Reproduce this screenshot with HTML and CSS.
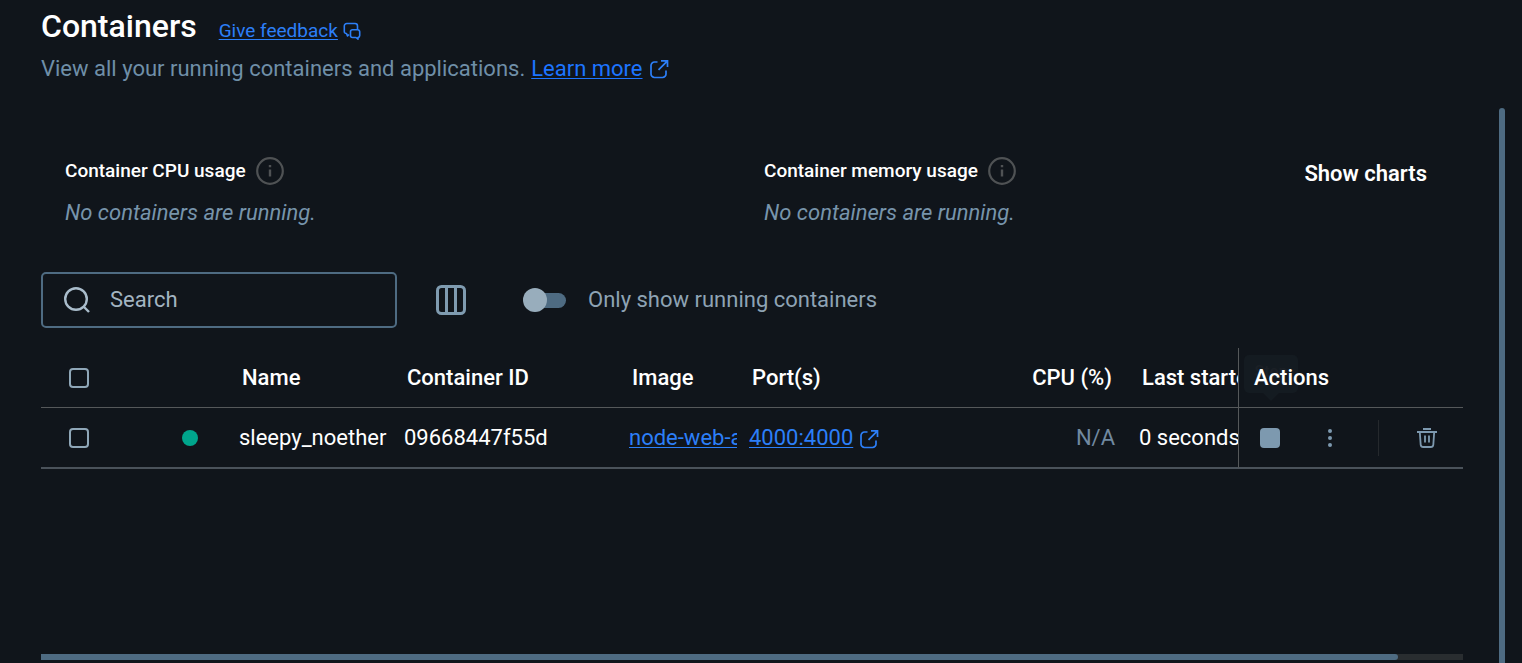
FILE: index.html
```html
<!DOCTYPE html>
<html lang="en">
<head>
<meta charset="utf-8">
<title>Containers</title>
<link rel="stylesheet" href="styles.css">
</head>
<body>
<svg class="sprite" aria-hidden="true">
  <symbol id="external" viewBox="0 0 20 20">
    <path d="M8.500 3H5.500A3.500 3.500 0 0 0 2 6.500V15a3.500 3.500 0 0 0 3.500 3.500H13.500A3.500 3.500 0 0 0 17 15v-3.500M12 1.800h6.500V8M18 2.300 9.500 10.800" fill="none" stroke="currentColor" stroke-width="1.700"/>
  </symbol>
  <symbol id="info" viewBox="0 0 28 28">
    <circle cx="14" cy="14" r="12.800" fill="none" stroke="currentColor" stroke-width="2.200"/>
    <path d="M14 12.500V19.500M14 8v2.200" stroke="currentColor" stroke-width="2.400"/>
  </symbol>
</svg>

<header class="page-header">
  <div class="title-row">
    <h1>Containers</h1>
    <a class="feedback" href="#"><span>Give feedback</span>
      <svg width="18" height="18" viewBox="0 0 18 18" fill="none" stroke="currentColor" stroke-width="1.600" stroke-linejoin="round"><path d="M6 12.500 4.500 14 3.500 11.500A2 2 0 0 1 1.300 9.500V4A2.500 2.500 0 0 1 3.800 1.500H12A2.500 2.500 0 0 1 14.500 4v3.500"/><path d="M9.500 7.800H14.700a2 2 0 0 1 2 2v3.700a2 2 0 0 1-1.700 2v1.700l-2-1.700H9.500a2 2 0 0 1-2-2V9.800a2 2 0 0 1 2-2z"/></svg>
    </a>
  </div>
  <p class="subtitle"><span>View all your running containers and applications.</span> <a href="#">Learn more</a><svg class="ext" width="20" height="20"><use href="#external"/></svg></p>
</header>

<div class="body">
  <main class="content">
    <section class="usage">
      <div>
        <h2>Container CPU usage <svg width="28" height="28"><use href="#info"/></svg></h2>
        <p>No containers are running.</p>
      </div>
      <div>
        <h2>Container memory usage <svg width="28" height="28"><use href="#info"/></svg></h2>
        <p>No containers are running.</p>
      </div>
      <button class="show-charts" type="button">Show charts</button>
    </section>

    <div class="toolbar">
      <label class="search">
        <svg width="28" height="28" viewBox="0 0 28 28" fill="none" stroke="currentColor" stroke-width="2.400"><circle cx="13" cy="13" r="10.800"/><path d="m20.500 20.500 5.500 5.500"/></svg>
        <input type="text" placeholder="Search" aria-label="Search">
      </label>
      <button class="columns" type="button" aria-label="Choose columns">
        <svg width="30" height="30" viewBox="0 0 30 30" fill="none" stroke="currentColor" stroke-width="3"><rect x="1.500" y="1.500" width="27" height="27" rx="4"/><path d="M10.500 2v26M19.500 2v26"/></svg>
      </button>
      <label class="switch"><input type="checkbox"><span>Only show running containers</span></label>
    </div>

    <div class="table-wrap">
      <table>
        <colgroup><col class="c-check"><col class="c-status"><col class="c-name"><col class="c-id"><col class="c-image"><col class="c-ports"><col class="c-cpu"><col class="c-last"><col class="c-actions"></colgroup>
        <thead>
          <tr>
            <th class="check"><input type="checkbox" aria-label="Select all"></th>
            <th></th>
            <th>Name</th>
            <th>Container ID</th>
            <th>Image</th>
            <th>Port(s)</th>
            <th class="num">CPU (%)</th>
            <th class="clip">Last started</th>
            <th class="actions">Actions<span class="tip">Stop</span></th>
          </tr>
        </thead>
        <tbody>
          <tr>
            <td class="check"><input type="checkbox" aria-label="Select sleepy_noether"></td>
            <td class="status"><i class="dot"></i></td>
            <td>sleepy_noether</td>
            <td>09668447f55d</td>
            <td class="clip"><a href="#">node-web-app</a></td>
            <td><a href="#">4000:4000</a><svg class="ext" width="20" height="20"><use href="#external"/></svg></td>
            <td class="num muted">N/A</td>
            <td class="clip">0 seconds ago</td>
            <td class="actions">
              <div class="buttons">
                <button type="button" aria-label="Stop"><svg width="20" height="20" viewBox="0 0 20 20" fill="currentColor"><rect width="20" height="20" rx="4"/></svg></button>
                <button type="button" aria-label="More"><svg width="20" height="20" viewBox="0 0 20 20" fill="currentColor"><circle cx="10" cy="3" r="2"/><circle cx="10" cy="10" r="2"/><circle cx="10" cy="17" r="2"/></svg></button>
                <button class="delete" type="button" aria-label="Delete"><svg width="20" height="20" viewBox="0 0 20 20" fill="none" stroke="currentColor" stroke-width="1.800"><path d="M6 1h8M0 4h20M2.800 4l.900 12.800A2.500 2.500 0 0 0 6.200 19h7.600a2.500 2.500 0 0 0 2.500-2.200L17.200 4M8 7.500v7M12 7.500v7"/></svg></button>
              </div>
            </td>
          </tr>
        </tbody>
      </table>
    </div>
    <div class="hscroll"><div class="hthumb"></div></div>
  </main>
  <div class="vscroll"></div>
</div>
</body>
</html>
```
FILE: styles.css
```css
* { box-sizing: border-box; }
body {
  margin: 0;
  min-height: 100vh;
  display: flex;
  flex-direction: column;
  background: #10151b;
  color: #fff;
  font: 22px/28px Roboto, sans-serif;
}
h1, h2, p { margin: 0; }
a, .feedback span { color: #2c7ff8; text-decoration: underline; text-decoration-thickness: 1px; text-underline-offset: 2px; }
button { border: 0; padding: 0; background: none; color: inherit; font: inherit; cursor: pointer; }
svg { display: block; flex: none; }
.sprite { position: absolute; width: 0; height: 0; }

.page-header { padding: 6px 41px 25px; }
.title-row { display: flex; align-items: center; gap: 22px; height: 40px; }
h1 { font-size: 32px; line-height: 40px; font-weight: 500; }
a.feedback { display: flex; align-items: center; gap: 5px; font-size: 19px; padding-top: 10px; text-decoration: none; }
.subtitle { display: flex; align-items: center; gap: 6px; margin-top: 9px; color: #6f8fa8; }
.subtitle a { color: #1d74ff; }
.ext { color: #2c7ff8; }

.body { flex: 1; display: flex; gap: 36px; padding: 0 17px 0 41px; }
.content { flex: 1; min-width: 0; display: flex; flex-direction: column; }
.vscroll { width: 6px; border-radius: 3px 3px 0 0; background: #4e6b82; }

.usage { display: grid; grid-template-columns: 699px 1fr auto; padding: 49px 36px 0 24px; }
h2 { display: flex; align-items: center; gap: 10px; font-size: 19px; font-weight: 500; line-height: 28px; }
h2 svg { color: #4f5254; }
.usage p { margin-top: 14px; color: #7794ab; font-style: italic; }
.show-charts { align-self: start; margin-top: 3px; font-weight: 600; line-height: 28px; }

.toolbar { display: flex; align-items: center; margin-top: 45px; }
.search { display: flex; align-items: center; gap: 19px; width: 356px; height: 56px; padding: 0 20px; border: 2px solid #4e6b82; border-radius: 5px; color: #a9bccb; }
.search input { flex: 1; min-width: 0; padding: 0; border: 0; outline: 0; background: none; color: inherit; font: inherit; }
.search input::placeholder { color: #a3b4c1; opacity: 1; }
.columns { margin-left: 39px; color: #7f9bb0; }
.switch { display: flex; align-items: center; gap: 22px; margin-left: 57px; color: #8ea3b4; }
.switch input { appearance: none; position: relative; width: 43px; height: 24px; margin: 0; }
.switch input::before { content: ""; position: absolute; inset: 5px 0 4px 4px; border-radius: 8px; background: #4e6b82; }
.switch input::after { content: ""; position: absolute; inset: 0 auto 0 0; width: 24px; border-radius: 50%; background: #98adbc; }

.table-wrap { flex: 1; margin-top: 20px; }
table { width: 100%; table-layout: fixed; border-collapse: separate; border-spacing: 0; }
.c-check { width: 76px; }
.c-status { width: 110px; }
.c-name { width: 165px; }
.c-id { width: 225px; }
.c-image { width: 120px; }
.c-cpu { width: 120px; }
.c-last { width: 111px; }
.c-actions { width: 225px; }
th, td { height: 60px; padding: 0 12px; text-align: left; white-space: nowrap; }
th { padding: 0 15px; border-bottom: 1px solid #55585a; font-weight: 500; }
td { height: 61px; border-bottom: 2px solid #4a525a; }
td .ext { display: inline-block; margin-left: 6px; vertical-align: -4px; }
.clip { overflow: hidden; padding-right: 0; }
.num { text-align: right; }
.muted { color: #7189a0; }
.check { padding: 0; text-align: center; }
.check input { appearance: none; display: block; width: 20px; height: 20px; margin: 0 auto; border: 2px solid #8fa7b8; border-radius: 4px; }
.status { padding: 0; }
.dot { display: block; width: 16px; height: 16px; margin-left: 65px; border-radius: 50%; background: #00a58c; }
.actions { position: relative; border-left: 1px solid #55585a; }
.buttons { display: flex; align-items: center; margin-left: 9px; color: #7d99af; }
.buttons button + button { margin-left: 40px; }
.buttons .delete { height: 36px; padding-left: 38px; border-left: 1px solid #25292d; margin-left: 38px; }
.tip { position: absolute; z-index: -1; left: 5px; top: 7px; width: 54px; height: 38px; border-radius: 5px; background: #141b21; color: #1b2026; font-size: 16px; line-height: 34px; text-align: center; }
.tip::after { content: ""; position: absolute; left: 19px; top: 38px; border: 8px solid transparent; border-top-color: #141b21; border-bottom: 0; }

.hscroll { height: 6px; margin-bottom: 3px; background: #292d30; }
.hthumb { width: 95.4%; height: 6px; border-radius: 0 3px 3px 0; background: #4e6b82; }
```
